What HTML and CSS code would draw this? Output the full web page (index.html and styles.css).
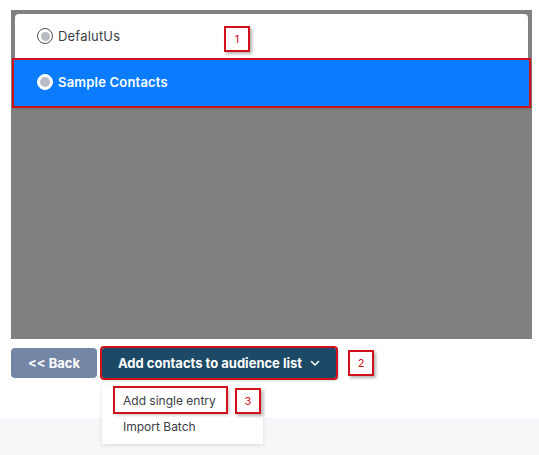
FILE: index.html
```html
<!DOCTYPE html>
<html>
<head>
<meta charset="utf-8">
<link rel="stylesheet" href="styles.css">
</head>
<body>
<div class="page">
  <div class="panel">
    <div class="list">
      <div class="row">
        <span class="radio"><span class="dot"></span></span>
        <span class="label">DefalutUs</span>
        <span class="tag tag-1">1</span>
      </div>
      <div class="row row-active">
        <span class="radio radio-active"><span class="dot"></span></span>
        <span class="label">Sample Contacts</span>
      </div>
    </div>
  </div>
  <div class="actions">
    <button class="btn btn-back">&lt;&lt; Back</button>
    <div class="dd">
      <button class="btn btn-add">Add contacts to audience list
        <svg class="chev" width="10" height="7" viewBox="0 0 10 7"><path d="M1.5 1.5 L5 5 L8.5 1.5" fill="none" stroke="#fff" stroke-width="1.6" stroke-linecap="round" stroke-linejoin="round"/></svg>
      </button>
      <div class="menu">
        <div class="item item-marked">Add single entry</div>
        <div class="item">Import Batch</div>
        <span class="tag tag-3">3</span>
      </div>
    </div>
    <span class="tag tag-2">2</span>
  </div>
  <div class="footer"></div>
</div>
</body>
</html>
```
FILE: styles.css
```css
html, body {
  margin: 0;
  padding: 0;
  background: #fff;
  font-family: Inter, "Open Sans", Arial, sans-serif;
}
.page {
  width: 539px;
  height: 455px;
  position: relative;
  overflow: hidden;
}
.panel {
  margin: 10px 0 0 11px;
  width: 521px;
  height: 329px;
  background: #808080;
  box-sizing: border-box;
  padding: 4px 4px 0 4px;
}
.list {
  background: #fff;
  border-radius: 4px 4px 0 0;
  width: 513px;
}
.row {
  height: 46px;
  display: flex;
  align-items: center;
  padding-left: 22px;
  position: relative;
}
.row-active {
  background: #0a7cff;
  outline: 2px solid #d0111b;
  outline-offset: 0;
  margin-left: -1px;
  margin-right: -1px;
  padding-left: 23px;
  box-shadow: 2px 2px 3px rgba(0,0,0,0.25);
}
.radio {
  width: 14px;
  height: 14px;
  border: 1.5px solid #4a4f5c;
  border-radius: 50%;
  display: flex;
  align-items: center;
  justify-content: center;
  background: #fff;
  margin-right: 5px;
  margin-top: -2px;
}
.dot {
  width: 9px;
  height: 9px;
  border-radius: 50%;
  background: #b9bcc3;
}
.radio-active {
  border-color: #fff;
  width: 14px;
  height: 14px;
  border-width: 1.5px;
}
.radio-active .dot {
  width: 10px;
  height: 10px;
  background: #b8bcc6;
}
.label {
  font-size: 13px;
  color: #3d3f45;
  letter-spacing: 0.2px;
  margin-top: -3px;
}
.row-active .label {
  color: #fff;
  font-weight: 600;
  margin-top: -2px;
}
.tag {
  position: absolute;
  width: 22px;
  height: 22px;
  border: 2px solid #d0111b;
  background: #fff;
  color: #d0111b;
  font-size: 11px;
  display: flex;
  align-items: center;
  justify-content: center;
  box-shadow: 2px 2px 3px rgba(0,0,0,0.3);
  box-sizing: content-box;
}
.tag-1 {
  left: 209px;
  top: 12px;
}
.actions {
  display: flex;
  align-items: center;
  margin: 9px 0 0 11px;
  position: relative;
  z-index: 2;
}
.btn {
  border: none;
  font-family: inherit;
  font-weight: 700;
  font-size: 13px;
  color: #fff;
  height: 30px;
  border-radius: 4px;
  cursor: pointer;
  padding: 0;
}
.btn-back {
  width: 86px;
  background: #7386a5;
  margin-right: 5px;
}
.dd {
  position: relative;
}
.btn-add {
  width: 234px;
  background: #1c4a66;
  border-radius: 2px;
  outline: 2px solid #d0111b;
  display: flex;
  align-items: center;
  justify-content: center;
  gap: 8px;
  box-shadow: 2px 2px 3px rgba(0,0,0,0.3);
}
.chev {
  margin-top: 1px;
}
.tag-2 {
  position: relative;
  margin-left: 12px;
}
.menu {
  position: absolute;
  left: 0;
  top: 38px;
  width: 161px;
  height: 58px;
  background: #fff;
  box-shadow: 0 1px 4px rgba(0,0,0,0.12);
  box-sizing: border-box;
  padding: 1px 0 0 12px;
}
.item {
  font-size: 12px;
  color: #3a3c42;
  height: 26px;
  display: flex;
  align-items: center;
  padding-left: 9px;
  box-sizing: border-box;
}
.item-marked {
  outline: 2px solid #d0111b;
  outline-offset: -1px;
  width: 113px;
  box-shadow: 2px 2px 3px rgba(0,0,0,0.25);
  height: 26px;
  margin-bottom: 0;
}
.tag-3 {
  left: 133px;
  top: 2px;
}
.footer {
  position: absolute;
  left: 0;
  right: 0;
  top: 418px;
  bottom: 0;
  background: #f6f7f9;
  z-index: 1;
}
```
